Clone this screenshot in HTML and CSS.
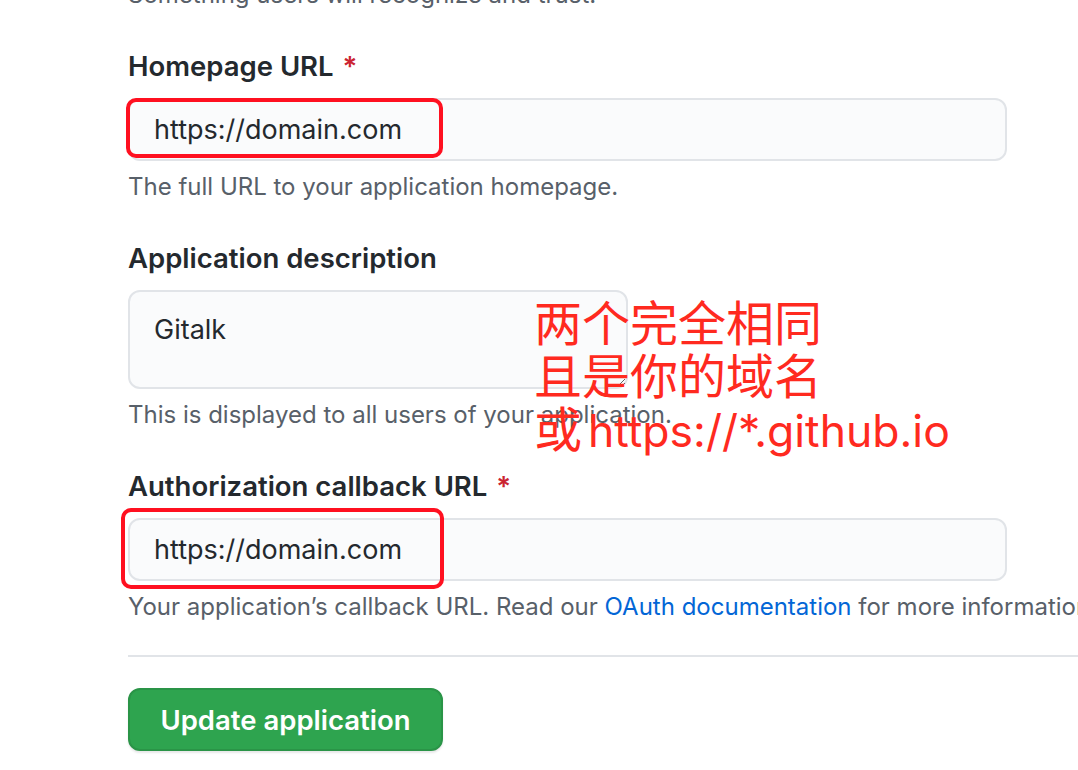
FILE: index.html
```html
<!DOCTYPE html>
<html lang="en">
<head>
<meta charset="utf-8">
<title>Update application</title>
<link rel="stylesheet" href="styles.css">
</head>
<body>
<form class="form">
  <p class="note note-top">Something users will recognize and trust.</p>

  <div class="field">
    <label class="label">Homepage URL <span class="req">*</span></label>
    <div class="control">
      <input class="input" type="text" value="https://domain.com">
      <span class="mark mark-1"></span>
    </div>
    <p class="note">The full URL to your application homepage.</p>
  </div>

  <div class="field">
    <label class="label">Application description</label>
    <div class="control">
      <textarea class="textarea">Gitalk</textarea>
      <div class="annotation">两个完全相同<br>且是你的域名<br>或<span class="annotation-url">https://*.github.io</span></div>
    </div>
    <p class="note">This is displayed to all users of your application.</p>
  </div>

  <div class="field">
    <label class="label">Authorization callback URL <span class="req">*</span></label>
    <div class="control">
      <input class="input" type="text" value="https://domain.com">
      <span class="mark mark-2"></span>
    </div>
    <p class="note nowrap">Your application’s callback URL. Read our <a class="link" href="#">OAuth documentation</a> for more information.</p>
  </div>

  <hr class="divider">

  <button class="btn" type="button">Update application</button>
</form>
</body>
</html>
```

FILE: styles.css
```css
html, body {
  margin: 0;
  padding: 0;
  background: #ffffff;
  overflow: hidden;
}

body {
  font-family: Inter, "Noto Sans", sans-serif;
  color: #24292e;
  width: 1078px;
  height: 770px;
}

.form {
  width: 1000px;
  padding-left: 128px;
  margin-top: -21px;
}

.note {
  margin: 10px 0 0;
  font-size: 24px;
  line-height: 32px;
  color: #586069;
}

.note-top {
  margin-top: 0;
}

.nowrap {
  white-space: nowrap;
}

.field {
  margin-top: 37px;
}

.label {
  display: block;
  font-size: 27.5px;
  line-height: 36px;
  font-weight: 600;
  color: #24292e;
}

.req {
  color: #cb2431;
  margin-left: 2px;
}

.control {
  position: relative;
  margin-top: 14px;
}

.input,
.textarea {
  box-sizing: border-box;
  display: block;
  margin: 0;
  font-family: Inter, "Noto Sans", sans-serif;
  font-size: 27px;
  color: #24292e;
  background: #fafbfc;
  border: 2px solid #e1e4e8;
  border-radius: 12px;
  padding: 0 24px;
  outline: none;
}

.input {
  width: 879px;
  height: 63px;
}

.textarea {
  width: 500px;
  height: 99px;
  padding-top: 20px;
  line-height: 36px;
  resize: vertical;
}

.mark {
  position: absolute;
  box-sizing: border-box;
  border: 4px solid #ff1020;
  border-radius: 10px;
}

.mark-1 {
  left: -2px;
  top: 0;
  width: 317px;
  height: 60px;
}

.mark-2 {
  left: -7px;
  top: -10px;
  width: 323px;
  height: 81px;
}

.annotation {
  position: absolute;
  left: 406px;
  top: 7px;
  font-family: Inter, "Noto Sans CJK SC", sans-serif;
  font-size: 48px;
  line-height: 53px;
  color: #ff2a1f;
  white-space: nowrap;
}

.annotation-url {
  font-size: 44.5px;
  margin-left: 6px;
}

.link {
  color: #0366d6;
  text-decoration: none;
}

.divider {
  margin: 32px 0 0;
  width: 1000px;
  height: 0;
  border: 0;
  border-top: 2px solid #e1e4e8;
}

.btn {
  margin-top: 31px;
  box-sizing: border-box;
  width: 315px;
  height: 63px;
  font-family: Inter, "Noto Sans", sans-serif;
  font-size: 27.5px;
  font-weight: 600;
  color: #ffffff;
  background: #2ea44f;
  border: 2px solid #2a9447;
  border-radius: 12px;
  box-shadow: 0 2px 2px rgba(27, 31, 35, 0.1);
}
```
